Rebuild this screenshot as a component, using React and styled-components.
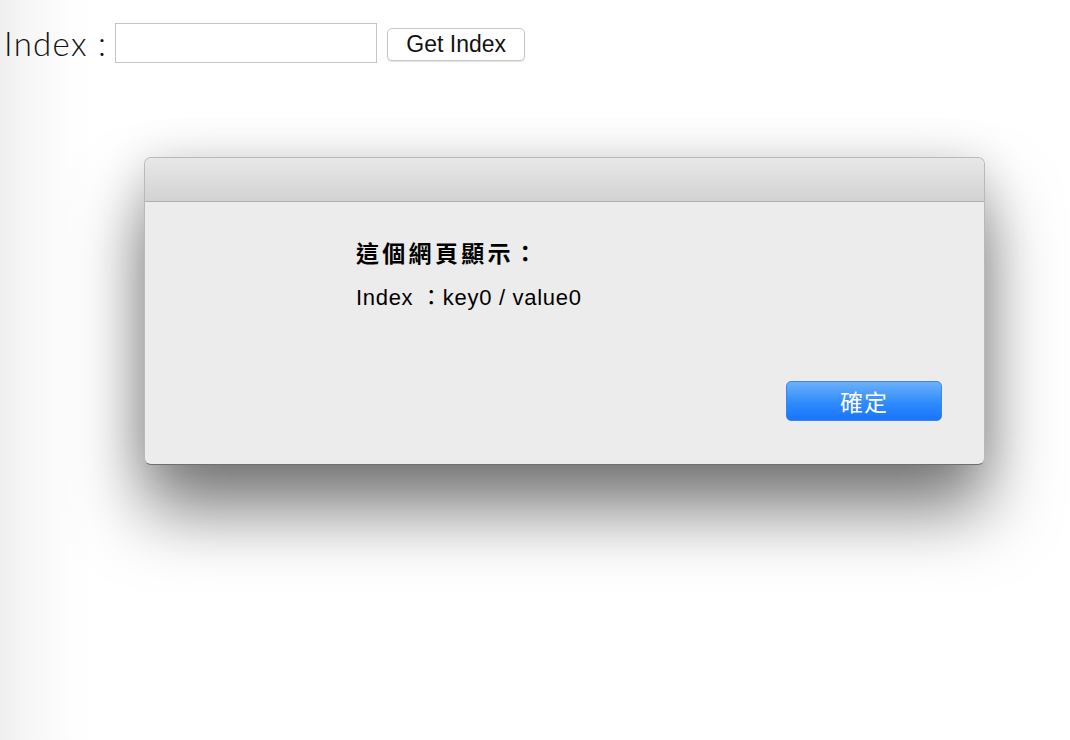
import styled, { createGlobalStyle } from "styled-components";

const GlobalStyle = createGlobalStyle`
  html, body {
    margin: 0;
    padding: 0;
    background: #fff;
  }
  body {
    width: 1070px;
    height: 740px;
    overflow: hidden;
    background: linear-gradient(to right, #efefef 0px, #f7f7f7 30px, #fdfdfd 70px, #ffffff 90px);
  }
`;

const Page = styled.div`
  height: 740px;
  position: relative;
`;

const Toolbar = styled.div`
  display: flex;
  align-items: center;
  padding: 23px 0 0 4px;
`;

const Label = styled.span`
  font-family: "Lato", "Liberation Sans", sans-serif;
  font-weight: 300;
  font-size: 33px;
  letter-spacing: 1.3px;
  color: #111;
  margin-right: 8px;
  line-height: 40px;
`;

const TextInput = styled.input`
  box-sizing: border-box;
  width: 262px;
  height: 40px;
  border: 1px solid #c4c4c4;
  background: #fff;
  margin: 0 10px 0 0;
  padding: 0 4px;
  outline: none;
`;

const PlainButton = styled.button`
  box-sizing: border-box;
  width: 138px;
  height: 33px;
  padding: 0;
  margin-top: 3px;
  border: 1px solid #c8c8c8;
  border-radius: 5px;
  background: #fff;
  box-shadow: 0 1px 1px rgba(0, 0, 0, 0.12);
  font-family: "Liberation Sans", "Noto Sans", sans-serif;
  font-size: 23px;
  color: #111;
`;

const Overlay = styled.div`
  position: absolute;
  inset: 0;
  padding: 157px 0 0 144px;
`;

const Dialog = styled.div`
  box-sizing: border-box;
  width: 841px;
  height: 308px;
  border-radius: 7px;
  border: 1px solid #b9b9b9;
  border-bottom-color: #6f6f6f;
  background: #ececec;
  overflow: hidden;
  display: flex;
  flex-direction: column;
  box-shadow: 0 45px 70px rgba(0, 0, 0, 0.52), 0 0 45px rgba(0, 0, 0, 0.12);
`;

const TitleBar = styled.div`
  height: 43px;
  flex: none;
  background: linear-gradient(#e9e8e9, #d3d2d3);
  border-bottom: 1px solid #b1b0b1;
`;

const Body = styled.div`
  flex: 1;
  display: flex;
  flex-direction: column;
  padding: 34px 42px 0 211px;
  color: #000;
`;

const Heading = styled.div`
  font-family: "Noto Sans CJK TC", "Noto Sans", sans-serif;
  font-size: 23px;
  letter-spacing: 3.3px;
  font-weight: 700;
  line-height: 32px;
`;

const Message = styled.div`
  margin-top: 17px;
  font-family: "Liberation Sans", "Noto Sans CJK TC", sans-serif;
  font-size: 22px;
  letter-spacing: 0.7px;
  line-height: 26px;
`;

const Actions = styled.div`
  display: flex;
  justify-content: flex-end;
  margin-top: 70px;
`;

const ConfirmButton = styled.button`
  box-sizing: border-box;
  width: 156px;
  height: 40px;
  border: 1px solid #3d86e8;
  border-radius: 5px;
  background: linear-gradient(#6cb0fb, #2f8bfb 55%, #1874fb);
  color: #fff;
  font-family: "Noto Sans CJK TC", sans-serif;
  font-size: 23px;
  letter-spacing: 1px;
  line-height: 1;
  padding: 0;
`;

export default function App() {
  return (
    <Page>
      <GlobalStyle />
      <Toolbar>
        <Label>Index :</Label>
        <TextInput type="text" />
        <PlainButton>Get Index</PlainButton>
      </Toolbar>
      <Overlay>
        <Dialog>
          <TitleBar />
          <Body>
            <Heading>這個網頁顯示：</Heading>
            <Message>Index ：key0 / value0</Message>
            <Actions>
              <ConfirmButton>確定</ConfirmButton>
            </Actions>
          </Body>
        </Dialog>
      </Overlay>
    </Page>
  );
}
